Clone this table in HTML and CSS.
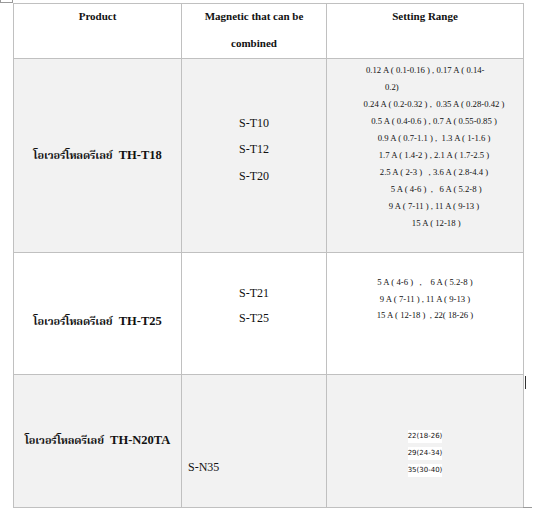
FILE: index.html
```html
<!DOCTYPE html>
<html>
<head>
<meta charset="utf-8">
<link rel="stylesheet" href="styles.css">
</head>
<body>
<div class="page">
  <span class="move-handle"></span>
  <div class="spec">
    <div class="cell head"><div class="hd">Product</div></div>
    <div class="cell head"><div class="hd">Magnetic that can be<br>combined</div></div>
    <div class="cell head"><div class="hd">Setting Range</div></div>

    <div class="cell shade prod"><div><span class="th">โอเวอร์โหลดรีเลย์</span>&nbsp; TH-T18</div></div>
    <div class="cell shade mag mag1"><div>S-T10<br>S-T12<br>S-T20</div></div>
    <div class="cell shade range range1">
      <div class="ln left1">0.12 A ( 0.1-0.16 ) , 0.17 A ( 0.14-</div>
      <div class="ln left2">0.2)</div>
      <div class="ln">0.24 A ( 0.2-0.32 ) ,  0.35 A ( 0.28-0.42 )</div>
      <div class="ln">0.5 A ( 0.4-0.6 ) , 0.7 A ( 0.55-0.85 )</div>
      <div class="ln">0.9 A ( 0.7-1.1 ) ,  1.3 A ( 1-1.6 )</div>
      <div class="ln">1.7 A ( 1.4-2 ) , 2.1 A ( 1.7-2.5 )</div>
      <div class="ln">2.5 A ( 2-3 )   , 3.6 A ( 2.8-4.4 )</div>
      <div class="ln">  5 A ( 4-6 )  ,   6 A ( 5.2-8 )</div>
      <div class="ln">9 A ( 7-11 ) , 11 A ( 9-13 )</div>
      <div class="ln">  15 A ( 12-18 )</div>
    </div>

    <div class="cell prod prod2"><div><span class="th">โอเวอร์โหลดรีเลย์</span>&nbsp; TH-T25</div></div>
    <div class="cell mag mag2"><div>S-T21<br>S-T25</div></div>
    <div class="cell range range2">
      <div class="ln">5 A ( 4-6 )   ,    6 A ( 5.2-8 )</div>
      <div class="ln">9 A ( 7-11 ) , 11 A ( 9-13 )</div>
      <div class="ln">15 A ( 12-18 )  , 22( 18-26 )</div>
    </div>

    <div class="cell shade prod"><div><span class="th">โอเวอร์โหลดรีเลย์</span>&nbsp; TH-N20TA</div></div>
    <div class="cell shade mag mag3"><div>S-N35</div></div>
    <div class="cell shade range range3">
      <div class="sl"><span>22(18-26)</span></div>
      <div class="sl"><span>29(24-34)</span></div>
      <div class="sl"><span>35(30-40)</span></div>
    </div>
  </div>
  <span class="cursor"></span>
  <span class="resize-handle"></span>
</div>
</body>
</html>
```

FILE: styles.css
```css
html, body {
  margin: 0;
  padding: 0;
  background: #ffffff;
}

.page {
  position: relative;
  padding: 3px 0 0 13px;
  font-family: "Liberation Serif", "Noto Serif Thai", "Noto Sans Thai", serif;
  color: #111;
}

.move-handle {
  position: absolute;
  left: 0;
  top: -9px;
  width: 11px;
  height: 10px;
  border: 1px solid #9a9a9a;
  background: #fff;
}

.resize-handle {
  position: absolute;
  left: 523px;
  top: 507px;
  width: 7px;
  height: 7px;
  border: 1px solid #9a9a9a;
  background: #fff;
}

.cursor {
  position: absolute;
  left: 525px;
  top: 376px;
  width: 1px;
  height: 13px;
  background: #333;
}

.spec {
  display: grid;
  grid-template-columns: 168px 145px 197px;
  grid-template-rows: 55px 194px 122px 133px;
  width: max-content;
  border-left: 1px solid #c0c0c0;
  border-top: 1px solid #c0c0c0;
}

.cell {
  box-sizing: border-box;
  border-right: 1px solid #c0c0c0;
  border-bottom: 1px solid #c0c0c0;
  display: flex;
  flex-direction: column;
  justify-content: center;
  text-align: center;
  min-width: 0;
}

.shade {
  background: #f2f2f2;
}

.head {
  justify-content: flex-start;
  font-size: 11px;
  font-weight: bold;
  line-height: 27px;
}

.hd {
  margin-top: -1px;
}

.prod {
  font-size: 12.5px;
  font-weight: bold;
}

.th {
  font-size: 11px;
  letter-spacing: -0.2px;
}

.prod2 {
  padding-top: 17px;
}

.mag {
  font-size: 12px;
}

.mag1 {
  line-height: 26.5px;
  padding-bottom: 12px;
}

.mag2 {
  line-height: 25px;
  padding-bottom: 16px;
}

.mag3 {
  justify-content: flex-start;
  text-align: left;
  line-height: 26px;
  padding: 79px 0 0 6px;
}

.range {
  justify-content: flex-start;
  font-size: 8.7px;
}

.range1 {
  padding: 3px 0 0 18px;
}

.range2 {
  padding-top: 21px;
}

.range2 .ln {
  line-height: 16.5px;
}

.range3 {
  padding-top: 53px;
}

.ln {
  line-height: 17px;
  white-space: pre;
}

.left1 {
  text-align: left;
  padding-left: 21px;
}

.left2 {
  text-align: left;
  padding-left: 40px;
}

.sl {
  line-height: 17px;
  font-family: "DejaVu Sans", "Liberation Sans", sans-serif;
  font-size: 7px;
}

.sl span {
  display: inline-block;
  background: #ffffff;
  line-height: 13px;
  vertical-align: middle;
}
```
